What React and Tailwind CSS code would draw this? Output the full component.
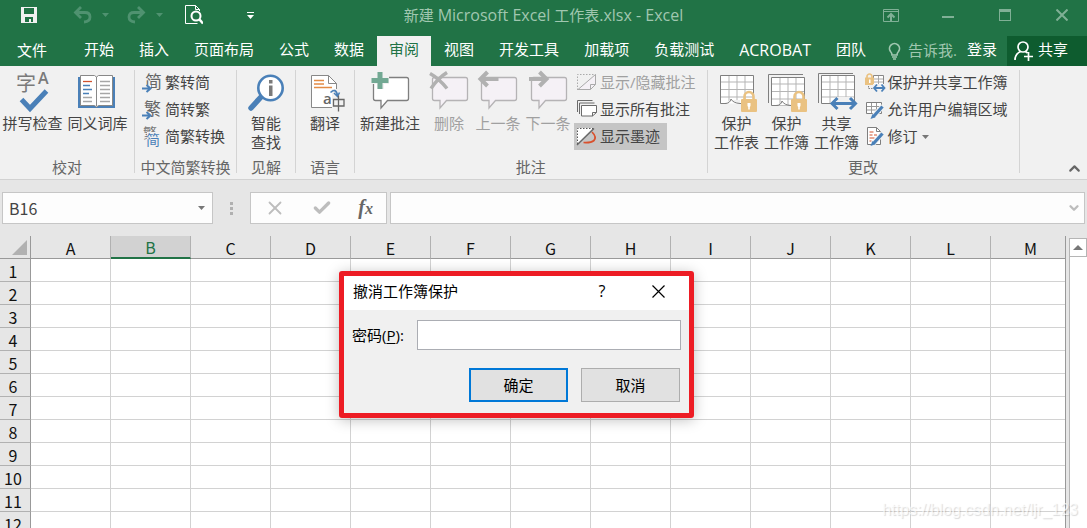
import { ChevronUp, ChevronDown, X, Check } from "lucide-react";

const tabs = ["开始", "插入", "页面布局", "公式", "数据", "审阅", "视图", "开发工具", "加载项", "负载测试", "ACROBAT", "团队"];
const columns = ["A", "B", "C", "D", "E", "F", "G", "H", "I", "J", "K", "L", "M"];
const rows = Array.from({ length: 12 }, (_, i) => i + 1);

const CJK = "Noto Sans CJK SC, sans-serif";

/* ---------- shared drawings ---------- */

function BigIcon({ children }) {
  return (
    <svg width="40" height="42" viewBox="0 0 40 42" fill="none" className="mt-px shrink-0 overflow-visible" aria-hidden="true">
      {children}
    </svg>
  );
}

function SmallIcon({ children }) {
  return (
    <svg width="20" height="20" viewBox="0 0 20 20" fill="none" className="shrink-0 overflow-visible" aria-hidden="true">
      {children}
    </svg>
  );
}

function Caret({ className }) {
  return (
    <svg width="7" height="4" viewBox="0 0 7 4" className={className} aria-hidden="true">
      <path d="M0 0h7L3.5 4z" fill="currentColor" />
    </svg>
  );
}

function Bubble({ stroke, fill }) {
  return (
    <path
      d="M5.5 7.5h31q2 0 2 2v19q0 2-2 2H17.500l-6.500 7.500v-7.500H5.500q-2 0-2-2v-19q0-2 2-2z"
      stroke={stroke}
      fill={fill}
      strokeWidth="1.3"
    />
  );
}

function Sheet() {
  return (
    <>
      <path d="M3.500 5.500h33v28h-33z" fill="#fff" stroke="#7f7f7f" />
      <path d="M12 6v27M20 6v27M28 6v27M4 12h32M4 19.500h32M4 27h32" stroke="#b5b5b5" />
    </>
  );
}

function Lock() {
  return (
    <>
      <path d="M27.500 30v-3.500a4.500 4.500 0 0 1 9 0V30" stroke="#eac282" strokeWidth="2.600" />
      <rect x="24" y="29" width="16" height="13" rx="1" fill="#eac282" />
      <path d="M30.500 33h3v3l-.7 1v2.500h-1.600V37l-.7-1z" fill="#fff" />
    </>
  );
}

/* ---------- large ribbon icons ---------- */

const icons = {
  spelling: (
    <BigIcon>
      <text x="3" y="21" fontSize="20" fill="#7a7a7a" fontFamily={CJK}>字</text>
      <text x="25" y="14" fontSize="16" fontWeight="600" fill="#7a7a7a" fontFamily="Open Sans, sans-serif">A</text>
      <path d="M8.500 29.500l8.500 9L33.500 21" stroke="#4a80b8" strokeWidth="5" />
    </BigIcon>
  ),
  thesaurus: (
    <BigIcon>
      <path d="M0 7h37v31H0z" fill="#4a80b8" />
      <path d="M2.500 5.500h14l2 1.500 2-1.500h14v30h-14l-2 1.500-2-1.500h-14z" fill="#fff" stroke="#888" />
      <path d="M18.500 7v29" stroke="#888" />
      <path d="M5 11.500h9" stroke="#d0532f" strokeWidth="1.300" />
      <path d="M5 15.500h7M5 19.500h9M5 23.500h6" stroke="#4a80b8" strokeWidth="1.300" />
      <path d="M5 27.500h9M5 31.500h9M22 11.500h10M22 15.500h10M22 19.500h10M22 23.500h10M22 27.500h10M22 31.500h10" stroke="#a6a6a6" strokeWidth="1.300" />
    </BigIcon>
  ),
  lookup: (
    <BigIcon>
      <path d="M15 27L5 38" stroke="#4a80b8" strokeWidth="5.500" strokeLinecap="round" />
      <circle cx="24.500" cy="18" r="12.200" fill="#fff" stroke="#4a80b8" strokeWidth="2.600" />
      <path d="M23 10h3.500v3.500H23zM23 15.500h3.500V26H23z" fill="#7a7a7a" />
    </BigIcon>
  ),
  translate: (
    <BigIcon>
      <path d="M6.500 5.500h17l8 8v24h-25z" fill="#fff" stroke="#888" />
      <path d="M23.500 5.500v8h8" stroke="#888" />
      <path d="M9 10.500h10M9 14h10M9 17.500h18" stroke="#e38b45" strokeWidth="1.400" />
      <path d="M27 19h8v22h-8z" fill="#f1f1f1" />
      <path d="M25.500 22.500q5-5 7 2.500M29 23l3.500 3.500 2-4" stroke="#4a80b8" strokeWidth="1.600" />
      <text x="18" y="33.500" fontSize="15" fill="#666" fontFamily="Open Sans, sans-serif" fontWeight="600">a</text>
      <path d="M28.500 29.500h10.500v6.500H28.500zM33.500 25.500v16" stroke="#666" strokeWidth="1.300" />
    </BigIcon>
  ),
  newComment: (
    <BigIcon>
      <Bubble stroke="#7f7f7f" fill="#fff" />
      <path d="M7 1h7v5h5v8h-5v5H7v-5H1V6h6z" fill="#f1f1f1" />
      <path d="M7.500 2h5v6h6v5h-6v6h-5v-6h-6V8h6z" fill="#72a893" />
    </BigIcon>
  ),
  remove: (
    <BigIcon>
      <Bubble stroke="#b5b3b5" fill="#f5f1f6" />
      <path d="M1 3.500q9 5 17 15M18 2.500Q9 8 2 18.500" stroke="#b1b1b1" strokeWidth="3.500" />
    </BigIcon>
  ),
  previous: (
    <BigIcon>
      <Bubble stroke="#b5b3b5" fill="#f5f1f6" />
      <path d="M9.500 2l-7 7 7 7M3.500 9h17" stroke="#b1b1b1" strokeWidth="4" />
    </BigIcon>
  ),
  next: (
    <BigIcon>
      <Bubble stroke="#b5b3b5" fill="#f5f1f6" />
      <path d="M11.500 2l7 7-7 7M17.500 9H1" stroke="#b1b1b1" strokeWidth="4" />
    </BigIcon>
  ),
  protectSheet: (
    <BigIcon>
      <Sheet />
      <path d="M9 34q2-4 5-4h9v7H9z" fill="#f1f1f1" />
      <path d="M8 33.500q5 0 6-4.500 2 4 9 4.500" fill="#fff" stroke="#7f7f7f" />
      <Lock />
    </BigIcon>
  ),
  protectBook: (
    <BigIcon>
      <path d="M1.500 33V4.500H36" stroke="#7f7f7f" />
      <g transform="translate(1 2)">
        <Sheet />
        <path d="M8 33.500q5 0 6-4.500 2 4 9 4.500" fill="#fff" stroke="#7f7f7f" />
      </g>
      <Lock />
    </BigIcon>
  ),
  shareBook: (
    <BigIcon>
      <path d="M1.500 33V3.500H36" stroke="#7f7f7f" />
      <g transform="translate(1 0)">
        <Sheet />
      </g>
      <path d="M20 27h16v12H20z" fill="#f1f1f1" />
      <path d="M20.500 28L15 33.500l5.500 5.500M33 28l5.500 5.500L33 39M16 33.500h22" stroke="#4a80b8" strokeWidth="3" />
    </BigIcon>
  ),
};

/* ---------- small ribbon icons ---------- */

function ToArrow() {
  return (
    <>
      <path d="M0 12h9v8H0z" fill="#f1f1f1" />
      <path d="M0 15.500h8M4.500 12l4 3.500-4 3.500" stroke="#4a80b8" strokeWidth="2" />
    </>
  );
}

function MiniSheet({ x = 0, y = 0 }) {
  return (
    <g transform={`translate(${x} ${y})`}>
      <path d="M.5.500h15v11H.5z" fill="#fff" stroke="#7f7f7f" />
      <path d="M5.500 1v10M10.500 1v10M1 4.500h14M1 8h14" stroke="#999" />
    </g>
  );
}

function Pencil() {
  return (
    <>
      <path d="M18 6L7.500 17.500" stroke="#f1f1f1" strokeWidth="5" />
      <path d="M17.500 6.500l-9 10" stroke="#4a80b8" strokeWidth="3.200" />
      <path d="M7.500 14L5.500 19l5-1.800z" fill="#4a80b8" />
    </>
  );
}

const smallIcons = {
  toSimplified: (
    <SmallIcon>
      <text x="3" y="15" fontSize="17" fill="#666" fontFamily={CJK}>简</text>
      <ToArrow />
    </SmallIcon>
  ),
  toTraditional: (
    <SmallIcon>
      <text x="2" y="15" fontSize="17" fill="#666" fontFamily={CJK}>繁</text>
      <ToArrow />
    </SmallIcon>
  ),
  convert: (
    <SmallIcon>
      <text x="1" y="11" fontSize="14" fill="#777" fontFamily={CJK}>繁</text>
      <path d="M5 5h14v14H5z" fill="#f1f1f1" />
      <text x="4" y="18" fontSize="14" fill="#4a80b8" fontFamily={CJK}>简</text>
    </SmallIcon>
  ),
  toggleNote: (
    <SmallIcon>
      <path d="M.5 17V1.500h18" stroke="#aaa" strokeDasharray="1.500 1.500" />
      <path d="M1 17L18 2v10l-5 4.500H1z" fill="#f5f1f6" />
      <path d="M1 16.500L18.500 1.500v10l-5 5H1M18.500 11.500h-5v5" stroke="#aaa" />
    </SmallIcon>
  ),
  allNotes: (
    <SmallIcon>
      <path d="M.5 12V.5h15M2.500 14V3h15" stroke="#6b6b6b" />
      <path d="M4.500 5.500h15v7l-4 3.500h-11z" fill="#fff" stroke="#6b6b6b" />
      <path d="M19.500 12.500h-4V16" stroke="#6b6b6b" />
    </SmallIcon>
  ),
  ink: (
    <SmallIcon>
      <path d="M0 1h16L0 17z" fill="#fff" />
      <path d="M.5 17V1.500h16" stroke="#555" strokeDasharray="1.500 1.500" />
      <path d="M0 18L17 1.500" stroke="#666" strokeWidth="1.300" />
      <path d="M15 5q5 5 2 8.500Q14 16 6.500 15.500" stroke="#d9502c" strokeWidth="1.700" />
    </SmallIcon>
  ),
  protectShare: (
    <SmallIcon>
      <path d="M8.500 2.500h10v10h-10z" fill="#fff" stroke="#888" />
      <path d="M13.500 3v9M9 6h9M9 9h9" stroke="#aaa" />
      <path d="M2 6V3.500a2.500 2.500 0 0 1 5 0V6" stroke="#eac282" strokeWidth="1.700" />
      <path d="M0 4.500h9V12H0z" fill="#eac282" />
      <path d="M4 6.500h1.500V10H4z" fill="#fff" />
      <path d="M3.500 13v2.500h4" stroke="#888" strokeDasharray="1.500 1" />
      <path d="M8 11h12v8H8z" fill="#f1f1f1" />
      <path d="M12 11.500L9 15l3 3.500M16.500 11.500l3 3.500-3 3.500M9.500 15h10" stroke="#4a80b8" strokeWidth="1.800" />
    </SmallIcon>
  ),
  allowEdit: (
    <SmallIcon>
      <MiniSheet x={1} y={2} />
      <Pencil />
    </SmallIcon>
  ),
  track: (
    <SmallIcon>
      <path d="M2.500.500h9l4 4v13h-13z" fill="#fff" stroke="#7f7f7f" />
      <path d="M11.500.500v4h4" stroke="#7f7f7f" />
      <path d="M4.500 5h4M4.500 8h3M9 8h3M4.500 11h5M4.500 14h2" stroke="#d0532f" />
      <Pencil />
    </SmallIcon>
  ),
};

/* ---------- ribbon building blocks ---------- */

function Group({ label, className = "", children }) {
  return (
    <section className="flex shrink-0 pb-[6px] pt-[3px]">
      <div className="flex flex-col">
        <div className={`flex h-[88px] items-start ${className}`}>{children}</div>
        <h2 className="-mb-1 h-5 text-center leading-5 text-[#666]">{label}</h2>
      </div>
      <div className="mt-px w-px bg-[#d4d4d4]" />
    </section>
  );
}

function LargeButton({ icon, lines, width, disabled }) {
  return (
    <button
      disabled={disabled}
      className={`flex shrink-0 flex-col items-center gap-[2px] whitespace-nowrap leading-[19px] ${width} ${disabled ? "text-[#a0a0a0]" : "text-[#444]"}`}
    >
      {icons[icon]}
      <span>
        {lines.map((line) => (
          <span key={line} className="block">{line}</span>
        ))}
      </span>
    </button>
  );
}

function SmallButton({ icon, label, disabled, active, caret }) {
  return (
    <button
      disabled={disabled}
      className={`flex h-[27px] items-center gap-[3px] whitespace-nowrap pl-[3px] pr-[7px] ${active ? "bg-[#c5c5c5]" : ""} ${disabled ? "text-[#a0a0a0]" : "text-[#444]"}`}
    >
      {smallIcons[icon]}
      {label}
      {caret && <Caret className="ml-px text-[#777]" />}
    </button>
  );
}

function TitleBar() {
  return (
    <header className="grid h-9 grid-cols-[1fr_auto_1fr] items-center pb-[6px] text-[#80b096]">
      <div className="flex items-center pl-5">
        <button aria-label="保存" className="w-[18px] text-white">
          <svg width="18" height="18" viewBox="0 0 18 18" aria-hidden="true">
            <path d="M1 1h16v16H1z" fill="#f1f1f1" />
            <path d="M4 2h10v6H4zM5 11h8v5h-2v-3H9v3H5z" fill="#217346" />
          </svg>
        </button>
        <button aria-label="撤消" className="ml-[35px] flex items-center gap-[9px] text-[#4f9270]">
          <svg width="20" height="18" viewBox="0 0 20 18" fill="none" stroke="currentColor" strokeWidth="2.800" aria-hidden="true">
            <path d="M8 1L2.500 6.500 8 12M2.500 6.500H12q5 0 5 4.500t-6 5" />
          </svg>
          <Caret />
        </button>
        <button aria-label="恢复" className="ml-[18px] flex items-center gap-[9px] text-[#4f9270]">
          <svg width="20" height="18" viewBox="0 0 20 18" fill="none" stroke="currentColor" strokeWidth="2.800" aria-hidden="true">
            <path d="M11 1l5.500 5.500L11 12M16.500 6.500H7q-5 0-5 4.500t6 5" />
          </svg>
          <Caret />
        </button>
        <button aria-label="打印预览" className="ml-[22px] text-white">
          <svg width="18" height="20" viewBox="0 0 18 20" fill="none" stroke="#fff" aria-hidden="true">
            <path d="M14.500 6V4.500l-4-4H.5v18h12M10.500.500v4h4" />
            <circle cx="11" cy="11" r="4.500" strokeWidth="2" fill="#217346" />
            <path d="M14 14l4 4.500" strokeWidth="2.500" />
          </svg>
        </button>
        <button aria-label="自定义快速访问工具栏" className="ml-11 flex flex-col gap-[2px] text-white">
          <span className="h-px w-[7px] bg-white" />
          <Caret />
        </button>
      </div>
      <h1 className="whitespace-nowrap leading-5 text-[#a0c7b0]">
        新建 <span className="text-base leading-5">Microsoft Excel</span> 工作表
        <span className="text-base leading-5">.xlsx - Excel</span>
      </h1>
      <div className="flex items-center justify-end gap-[33px] pr-[13px]">
        <button aria-label="功能区显示选项" className="flex w-6 justify-center">
          <svg width="16" height="13" viewBox="0 0 16 13" fill="none" stroke="currentColor" aria-hidden="true">
            <path d="M.5.500h15v12H.5zM1 2.500h14" />
            <path d="M8 12V6M4.500 8.500L8 5l3.500 3.500" strokeWidth="2" />
          </svg>
        </button>
        <button aria-label="最小化" className="flex h-4 w-6 items-center justify-center">
          <span className="mt-1 h-[2px] w-3 bg-[#80b096]" />
        </button>
        <button aria-label="最大化" className="flex w-6 justify-center">
          <span className="h-3 w-3 border border-t-[3px] border-[#80b096]" />
        </button>
        <button aria-label="关闭" className="flex w-6 justify-center">
          <svg width="12" height="12" viewBox="0 0 12 12" stroke="currentColor" strokeWidth="2" aria-hidden="true">
            <path d="M.5.500l11 11M11.500.500l-11 11" />
          </svg>
        </button>
      </div>
    </header>
  );
}

function TabBar() {
  return (
    <nav className="flex h-[30px] whitespace-nowrap text-white">
      <button className="mr-2 w-16 pb-px">文件</button>
      <div className="flex gap-px">
        {tabs.map((tab) => (
          <button
            key={tab}
            className={`px-3 pb-[3px] ${tab === "审阅" ? "bg-[#f1f1f1] text-[#217346]" : ""} ${tab === "ACROBAT" ? "text-base" : ""}`}
          >
            {tab}
          </button>
        ))}
      </div>
      <div className="ml-auto flex">
        <button className="flex items-center gap-[7px] pb-px text-[#a0c7b0]">
          <svg width="13" height="18" viewBox="0 0 13 18" fill="none" stroke="currentColor" strokeWidth="1.700" aria-hidden="true">
            <path d="M4 13q0-2-1.500-3.500a5 5 0 1 1 8 0Q9 11 9 13zM4 15h5M5 17h3" />
          </svg>
          告诉我.
        </button>
        <button className="px-[10px] pb-[3px]">登录</button>
        <button className="flex w-20 items-center gap-[5px] bg-[#0e5c2f] pb-[3px] pl-[7px]">
          <svg width="19" height="20" viewBox="0 0 19 20" fill="none" stroke="#fff" strokeWidth="1.700" className="mt-[2px]" aria-hidden="true">
            <circle cx="9" cy="6" r="5" />
            <path d="M1 19q0-6 5.500-8.500M11.500 10.500l2 1.500M14.500 11v9M10 15.500h9" />
          </svg>
          共享
        </button>
      </div>
    </nav>
  );
}

function Ribbon() {
  return (
    <div className="flex border-b border-[#d2d2d2] bg-[#f1f1f1]">
      <Group label="校对" className="pr-1">
        <LargeButton icon="spelling" lines={["拼写检查"]} width="w-[65px]" />
        <LargeButton icon="thesaurus" lines={["同义词库"]} width="w-[65px]" />
      </Group>
      <Group label="中文简繁转换" className="px-1">
        <div>
          <SmallButton icon="toSimplified" label="繁转简" />
          <SmallButton icon="toTraditional" label="简转繁" />
          <SmallButton icon="convert" label="简繁转换" />
        </div>
      </Group>
      <Group label="见解">
        <LargeButton icon="lookup" lines={["智能", "查找"]} width="w-[58px]" />
      </Group>
      <Group label="语言">
        <LargeButton icon="translate" lines={["翻译"]} width="w-[58px]" />
      </Group>
      <Group label="批注" className="pr-1">
        <LargeButton icon="newComment" lines={["新建批注"]} width="w-[70px]" />
        <LargeButton icon="remove" lines={["删除"]} width="w-12" disabled />
        <LargeButton icon="previous" lines={["上一条"]} width="w-[50px]" disabled />
        <LargeButton icon="next" lines={["下一条"]} width="w-[50px]" disabled />
        <div className="ml-px">
          <SmallButton icon="toggleNote" label="显示/隐藏批注" disabled />
          <SmallButton icon="allNotes" label="显示所有批注" />
          <SmallButton icon="ink" label="显示墨迹" active />
        </div>
      </Group>
      <Group label="更改" className="px-1">
        <LargeButton icon="protectSheet" lines={["保护", "工作表"]} width="w-[50px]" />
        <LargeButton icon="protectBook" lines={["保护", "工作簿"]} width="w-[50px]" />
        <LargeButton icon="shareBook" lines={["共享", "工作簿"]} width="w-[50px]" />
        <div>
          <SmallButton icon="protectShare" label="保护并共享工作簿" />
          <SmallButton icon="allowEdit" label="允许用户编辑区域" />
          <SmallButton icon="track" label="修订" caret />
        </div>
      </Group>
      <button aria-label="折叠功能区" className="ml-auto self-end pb-[2px] pr-1 text-[#666]">
        <ChevronUp size={17} strokeWidth={3} />
      </button>
    </div>
  );
}

function FormulaBar() {
  return (
    <div className="flex h-14 items-center pl-[2px] pr-[2px]">
      <div className="flex h-8 w-[211px] items-center border border-[#c6c6c6] bg-[#fdfdfd] pr-[7px]">
        <input
          aria-label="名称框"
          defaultValue="B16"
          className="min-w-0 flex-1 bg-transparent pl-[6px] font-['Noto_Sans_CJK_SC',sans-serif] text-base text-[#444] outline-none"
        />
        <Caret className="text-[#777]" />
      </div>
      <div className="ml-[17px] flex w-[3px] flex-col gap-[2px]">
        <span className="h-[3px] bg-[#b0b0b0]" />
        <span className="h-[3px] bg-[#b0b0b0]" />
        <span className="h-[3px] bg-[#b0b0b0]" />
      </div>
      <div className="ml-[17px] flex h-8 w-[137px] items-center justify-around border border-[#c6c6c6] bg-[#fdfdfd] text-[#bdbdbd]">
        <button aria-label="取消输入"><X size={22} strokeWidth={2} /></button>
        <button aria-label="输入"><Check size={20} strokeWidth={4} /></button>
        <button aria-label="插入函数" className="font-['Liberation_Serif',serif] text-xl font-bold italic leading-5 text-[#666]">
          f<span className="text-base leading-5">x</span>
        </button>
      </div>
      <div className="ml-[3px] flex h-8 flex-1 items-center border border-[#c6c6c6] bg-[#fdfdfd] pr-[3px]">
        <input aria-label="编辑栏" className="min-w-0 flex-1 bg-transparent pl-2 text-base outline-none" />
        <ChevronDown size={14} strokeWidth={4} className="text-[#bdbdbd]" />
      </div>
    </div>
  );
}

function Grid() {
  return (
    <div className="flex min-h-0 flex-1 overflow-hidden">
      <div className="min-w-0 flex-1 overflow-hidden border-r border-[#999]">
        <table className="w-full table-fixed border-separate border-spacing-0 font-['Noto_Sans_CJK_SC',sans-serif] text-base leading-5 text-[#111]">
          <colgroup>
            <col className="w-[31px]" />
            {columns.map((c) => (
              <col key={c} className={c === "M" ? "" : "w-20"} />
            ))}
          </colgroup>
          <thead>
            <tr className="h-[23px]">
              <td className="border-b border-r border-[#999] p-0">
                <svg width="15" height="15" viewBox="0 0 15 15" className="ml-3" aria-hidden="true">
                  <path d="M15 0v15H0z" fill="#b1b1b1" />
                </svg>
              </td>
              {columns.map((c) => (
                <th
                  key={c}
                  scope="col"
                  className={
                    c === "B"
                      ? "border-b-2 border-r border-b-[#217346] border-r-[#b1b1b1] bg-[#d2d2d2] p-0 pt-px font-normal leading-5 text-[#217346]"
                      : `border-b border-b-[#999] p-0 pt-[2px] font-normal ${c === "M" ? "pl-[5px]" : "border-r border-r-[#b1b1b1]"}`
                  }
                >
                  {c}
                </th>
              ))}
            </tr>
          </thead>
          <tbody>
            {rows.map((r) => (
              <tr key={r} className="h-[23px]">
                <th scope="row" className="border-b border-r border-b-[#b1b1b1] border-r-[#999] p-0 pr-1 pt-[2px] font-normal">
                  {r}
                </th>
                {columns.map((c) => (
                  <td key={c} className={`border-b border-[#d2d2d2] bg-white p-0 ${c === "M" ? "" : "border-r"}`} />
                ))}
              </tr>
            ))}
          </tbody>
        </table>
      </div>
      <div className="ml-[3px] mt-[2px] flex w-[18px] flex-col">
        <button aria-label="向上滚动" className="flex h-[19px] shrink-0 items-center justify-center border border-[#b5b5b5] bg-white">
          <svg width="10" height="5" viewBox="0 0 10 5" aria-hidden="true">
            <path d="M5 0l5 5H0z" fill="#777" />
          </svg>
        </button>
        <div className="flex-1 border-l border-[#b5b5b5] bg-white" />
      </div>
    </div>
  );
}

function PasswordDialog() {
  return (
    <form
      role="dialog"
      aria-labelledby="dialog-title"
      onSubmit={(e) => e.preventDefault()}
      className="absolute left-[339px] top-[271px] w-[355px] rounded-[3px] border-[5px] border-[#ed1c24] bg-[#f0f0f0] text-black shadow-[0_2px_14px_rgba(0,0,0,0.25)]"
    >
      <div className="flex h-[34px] items-center bg-white pb-1 pl-[9px] pr-[23px]">
        <h2 id="dialog-title" className="flex-1">撤消工作簿保护</h2>
        <button type="button" aria-label="帮助" className="mr-[42px] w-4 text-base">?</button>
        <button type="button" aria-label="关闭" className="w-[14px]">
          <svg width="13" height="13" viewBox="0 0 13 13" stroke="#000" strokeWidth="1.200" aria-hidden="true">
            <path d="M.5.500l12 12M12.500.500l-12 12" />
          </svg>
        </button>
      </div>
      <div className="flex items-center px-2 pt-[10px]">
        <label htmlFor="password" className="w-[65px] whitespace-nowrap">
          密码(<span className="underline underline-offset-2">P</span>):
        </label>
        <input id="password" type="password" className="h-[30px] min-w-0 flex-1 border border-[#abadb3] bg-white px-2 outline-none" />
      </div>
      <div className="flex justify-end gap-[13px] px-[9px] pb-[11px] pt-[18px]">
        <button type="submit" className="h-[34px] w-[99px] border-2 border-[#0078d7] bg-[#e1e1e1]">确定</button>
        <button type="button" className="h-[34px] w-[99px] border border-[#adadad] bg-[#e1e1e1]">取消</button>
      </div>
    </form>
  );
}

export default function App() {
  return (
    <div className="relative flex h-screen flex-col overflow-hidden bg-[#e6e6e6] font-['Open_Sans','Noto_Sans_CJK_SC',sans-serif] text-[15px]">
      <div className="bg-[#217346]">
        <TitleBar />
        <TabBar />
      </div>
      <Ribbon />
      <FormulaBar />
      <Grid />
      <PasswordDialog />
      <span className="absolute bottom-2 right-[9px] font-['Liberation_Sans',sans-serif] text-base leading-5 text-white/70 [text-shadow:1px_1px_1px_rgba(0,0,0,0.15)]">
        https://blog.csdn.net/ljr_123
      </span>
    </div>
  );
}
